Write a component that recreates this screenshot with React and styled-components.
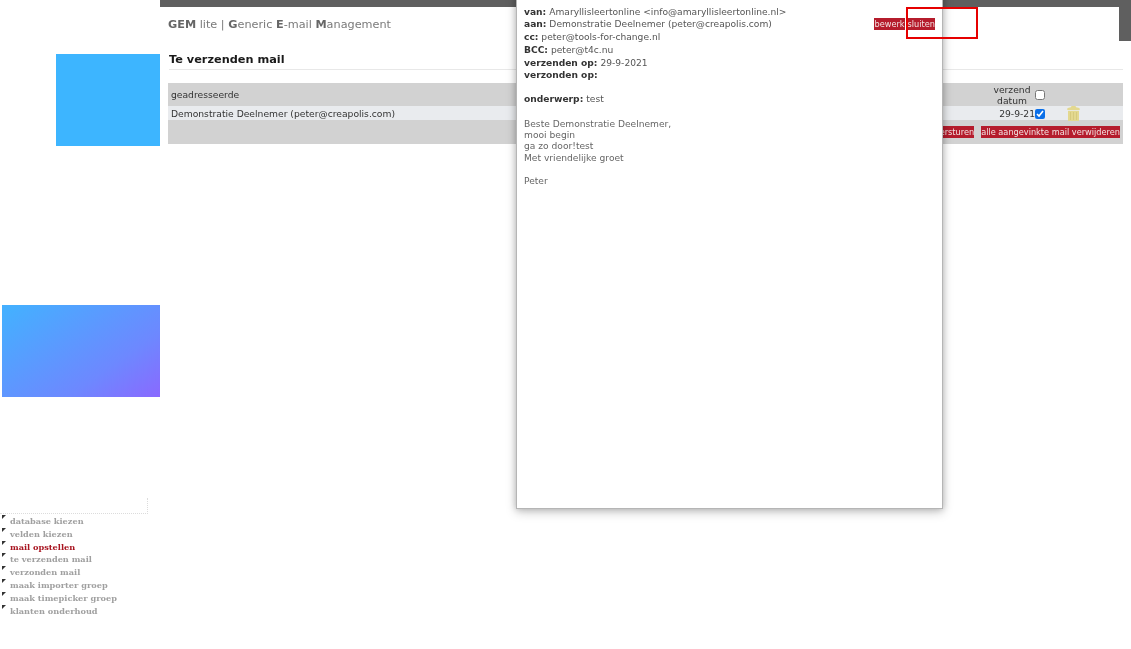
import React from "react";
import styled, { createGlobalStyle } from "styled-components";

const Global = createGlobalStyle`
  html, body { margin: 0; padding: 0; background: #fff; }
  body { font-family: "DejaVu Sans", Verdana, sans-serif; font-size: 9.2px; color: #333; overflow: hidden; }
`;
const Page = styled.div`
  position: relative; display: grid; grid-template-columns: 160px 1fr;
  width: 1131px; height: 649px; overflow: hidden; background: #fff; filter: blur(0.35px);
`;
const Sidebar = styled.aside`
  display: flex; flex-direction: column; align-items: flex-end; padding-top: 54px; box-sizing: border-box;
`;
const BlueSquare = styled.div`
  width: 104px; height: 92px; background: #3db5ff;
`;
const GradientBlock = styled.div`
  width: 158px; height: 92px; margin-top: 159px;
  background: linear-gradient(145deg, #45afff 5%, #6d88ff 68%, #8a69ff 100%);
`;
const DottedBox = styled.div`
  align-self: flex-start; width: 148px; height: 16px; margin-top: 101px; box-sizing: border-box;
  border-right: 1px dotted #dcdcdc; border-bottom: 1px dotted #dcdcdc;
`;
const Menu = styled.nav`
  align-self: flex-start; display: flex; flex-direction: column; margin-top: 1px; width: 160px;
`;
const MenuItem = styled.a`
  position: relative; display: block; height: 12.8px; padding-left: 10px;
  font: bold 8.2px/12.8px "DejaVu Serif", serif; white-space: nowrap;
  color: ${p => (p.$active ? "#a81420" : "#a0a0a0")};
  &::before {
    content: ""; position: absolute; left: 2px; top: 0; width: 0; height: 0;
    border-top: 4px solid #333; border-right: 4px solid transparent;
  }
`;
const Main = styled.main`
  display: flex; flex-direction: column; min-width: 0;
`;
const Header = styled.header`
  height: 41px; box-sizing: border-box; background: #fff;
  border-top: 7px solid #5f5f5f; border-right: 12px solid #5f5f5f;
  padding: 11px 0 0 8px; font-size: 11.25px; line-height: 13px; color: #7a7a7a;
  b { color: #666; }
`;
const Title = styled.h1`
  margin: 12px 8px 0 9px; padding-bottom: 2px; border-bottom: 1px solid #e8e8e8;
  font-size: 11.3px; line-height: 14px; font-weight: bold; color: #1a1a1a;
`;
const Table = styled.div`
  margin: 13px 8px 0 8px; background: #d2d2d2; height: 61px; display: grid;
  grid-template-rows: 23px 14px 24px;
`;
const Row = styled.div`
  display: grid; grid-template-columns: 1fr 46px 10px 78px; align-items: center; padding-left: 3px;
  padding-bottom: ${p => (p.$light ? "1px" : "0")}; box-sizing: border-box;
  background: ${p => (p.$light ? "#e9ebee" : "transparent")}; color: #333;
`;
const DateCell = styled.div`
  line-height: 11px; text-align: ${p => (p.$head ? "center" : "right")};
`;
const Box = styled.input`
  margin: 0; width: 10px; height: 10px; accent-color: #0b6fe8;
`;
const Bin = styled.svg`
  width: 13px; height: 15px; align-self: start; margin-left: 22px;
`;
const Foot = styled.div`
  display: flex; justify-content: flex-end; align-items: center; gap: 7px; padding-right: 3px;
`;
const RedButton = styled.span`
  display: inline-block; background: #b51c2c; color: #f3e3e3; font-size: 8.2px; line-height: 12px; white-space: nowrap;
`;
const Modal = styled.section`
  position: absolute; left: 516px; top: -10px; width: 427px; height: 519px; box-sizing: border-box;
  background: #fff; border: 1px solid #b5b5b5; box-shadow: 0 3px 10px rgba(0,0,0,.22), 0 0 6px rgba(0,0,0,.18);
  padding: 14.5px 7px 0; font-size: 9.15px; line-height: 12.8px; color: #555;
`;
const Meta = styled.div`
  b { color: #333; }
`;
const Subject = styled.div`
  margin-top: 11px; b { color: #333; }
`;
const Body = styled.div`
  margin-top: 12.5px; line-height: 11.4px; color: #666;
`;
const Actions = styled.div`
  position: absolute; top: 27px; right: 7px; display: flex; gap: 3px;
`;
const Marker = styled.div`
  position: absolute; left: 906px; top: 7px; width: 72px; height: 32px; box-sizing: border-box; border: 2px solid #e60000;
`;

const menu = ["database kiezen","velden kiezen","mail opstellen","te verzenden mail","verzonden mail","maak importer groep","maak timepicker groep","klanten onderhoud"];

export default function App() {
  return (
    <Page>
      <Global />
      <Sidebar>
        <BlueSquare />
        <GradientBlock />
        <DottedBox />
        <Menu>
          {menu.map((m, i) => <MenuItem key={m} $active={i === 2}>{m}</MenuItem>)}
        </Menu>
      </Sidebar>
      <Main>
        <Header><b>GEM</b> lite | <b>G</b>eneric <b>E</b>-mail <b>M</b>anagement</Header>
        <Title>Te verzenden mail</Title>
        <Table>
          <Row>
            <span>geadresseerde</span>
            <DateCell $head>verzend<br />datum</DateCell>
            <Box type="checkbox" readOnly />
            <span />
          </Row>
          <Row $light>
            <span>Demonstratie Deelnemer (peter@creapolis.com)</span>
            <DateCell>29-9-21</DateCell>
            <Box type="checkbox" checked readOnly />
            <Bin viewBox="0 0 13 15">
              <path d="M4.5 0h4l.6 1.2c1.6.2 3 .6 3.6 1.2V4H.3V2.4c.6-.6 2-1 3.6-1.2z" fill="#e3d88f" />
              <path d="M1 4.8h11V15H1z" fill="#e3d88f" />
              <path d="M3.5 6v8M6.5 6v8M9.5 6v8" stroke="#d3c77a" strokeWidth=".8" />
            </Bin>
          </Row>
          <Foot>
            <RedButton>versturen</RedButton>
            <RedButton>alle aangevinkte mail verwijderen</RedButton>
          </Foot>
        </Table>
      </Main>
      <Modal>
        <Meta>
          <div><b>van:</b> Amaryllisleertonline &lt;info@amaryllisleertonline.nl&gt;</div>
          <div><b>aan:</b> Demonstratie Deelnemer (peter@creapolis.com)</div>
          <div><b>cc:</b> peter@tools-for-change.nl</div>
          <div><b>BCC:</b> peter@t4c.nu</div>
          <div><b>verzenden op:</b> 29-9-2021</div>
          <div><b>verzonden op:</b></div>
        </Meta>
        <Subject><b>onderwerp:</b> test</Subject>
        <Body>
          Beste Demonstratie Deelnemer,<br />mooi begin<br />ga zo door!test<br />Met vriendelijke groet<br /><br />Peter
        </Body>
        <Actions>
          <RedButton>bewerk</RedButton>
          <RedButton>sluiten</RedButton>
        </Actions>
      </Modal>
      <Marker />
    </Page>
  );
}
